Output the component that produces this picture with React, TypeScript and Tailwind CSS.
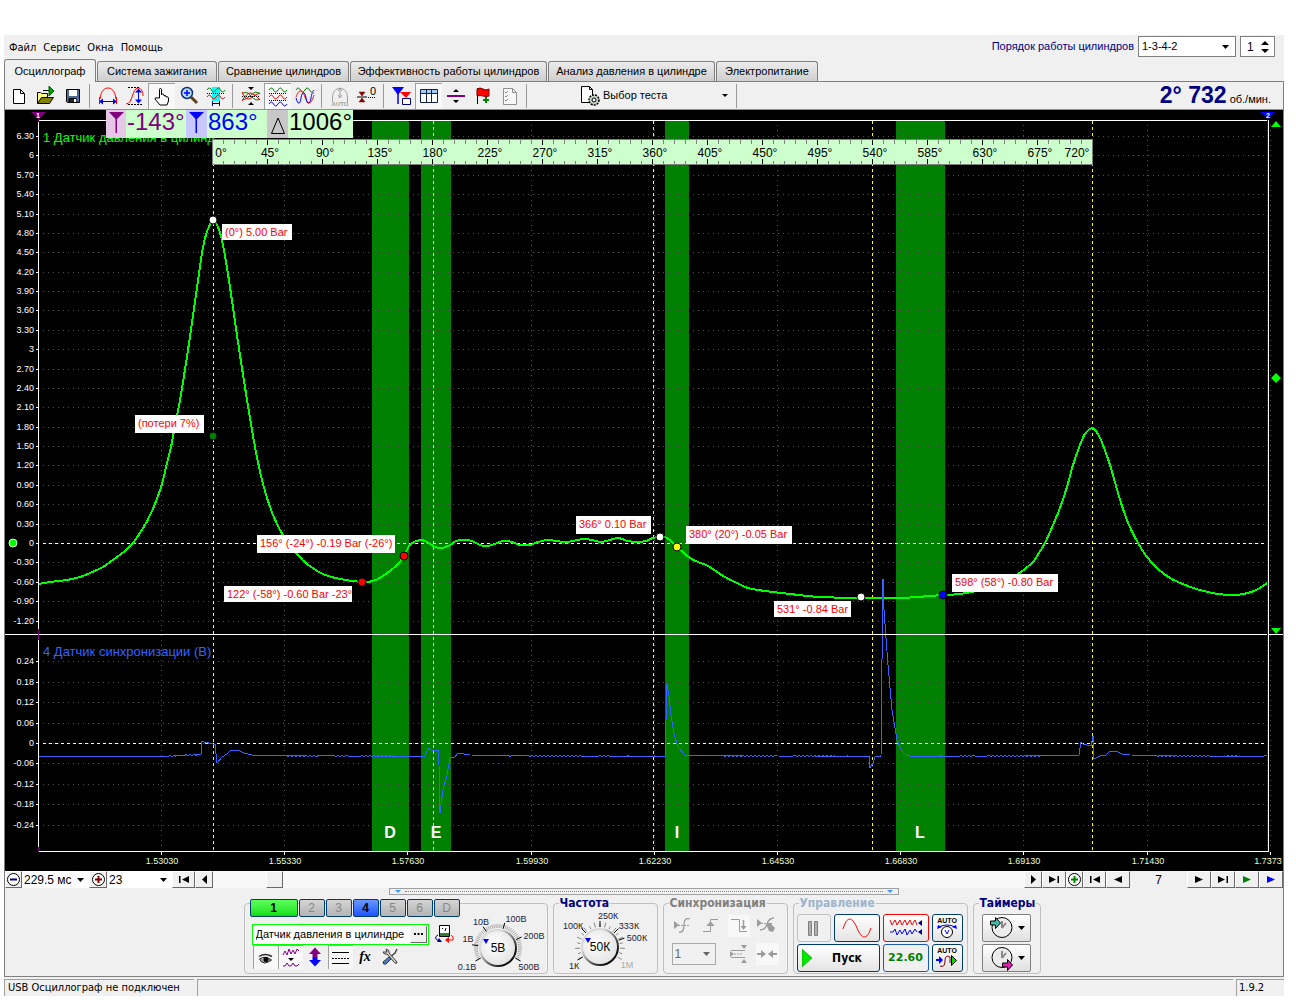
import type { ReactNode } from "react";
import clsx from "clsx";

type Pt = [number, number];

const TABS = [
  { t: "Осциллограф", w: "w-[92px]" },
  { t: "Система зажигания", w: "w-[120px]" },
  { t: "Сравнение цилиндров", w: "w-[131px]" },
  { t: "Эффективность работы цилиндров", w: "w-[197px]" },
  { t: "Анализ давления в цилиндре", w: "w-[167px]" },
  { t: "Электропитание", w: "w-[102px]" },
];

/* ---------- chart data, in the chart's own coordinates ---------- */

const PRESSURE: Pt[] = [
  [38, 584], [50, 582], [67, 580], [80, 577], [90, 573], [103, 567], [110, 562], [117, 557], [125, 551], [133, 543],
  [145, 525], [150, 515], [155, 504], [162, 484], [166, 467], [171, 447], [174, 431], [180, 400], [188, 350], [196, 295],
  [203, 247], [208, 229], [213, 221], [218, 227], [223, 245], [230, 287], [238, 342], [247, 400], [255, 447],
  [263, 484], [273, 515], [284, 537], [298, 555], [307, 564], [323, 574], [340, 579], [362, 582], [373, 581],
  [383, 576], [397, 565], [404, 556], [410, 545], [420, 540], [427, 542], [435, 547], [442, 548], [450, 545],
  [456, 541], [464, 540], [472, 541], [480, 545], [487, 546], [495, 544], [503, 541], [512, 542], [520, 545],
  [530, 545], [538, 542], [547, 540], [556, 541], [565, 542], [573, 541], [583, 539], [592, 540], [601, 542],
  [610, 540], [618, 538], [628, 541], [637, 542], [646, 541], [653, 538], [660, 537], [667, 538], [677, 547],
  [690, 558], [698, 562], [706, 565], [713, 569], [723, 576], [737, 583], [748, 588], [765, 591], [790, 594], [820, 597],
  [861, 598], [900, 598], [930, 596], [943, 595], [960, 594], [980, 590], [1000, 583], [1018, 574], [1026, 568],
  [1033, 562], [1039, 553], [1045, 543], [1053, 525], [1060, 508], [1067, 487], [1073, 465], [1080, 445], [1085, 434],
  [1092, 428], [1096, 431], [1101, 440], [1110, 465], [1116, 486], [1122, 506], [1129, 525], [1138, 543],
  [1147, 557], [1158, 569], [1170, 578], [1185, 585], [1200, 590], [1218, 594], [1235, 595], [1248, 593],
  [1258, 589], [1267, 583],
];

const SYNC: Pt[] = [
  [38, 756], [160, 756], [201, 754], [202, 741], [204, 742], [213, 744], [215, 744], [217, 763], [222, 757], [227, 754],
  [231, 750], [238, 750], [244, 753], [252, 755], [425, 756], [428, 748], [431, 750], [438, 750], [439, 765],
  [440, 813], [443, 790], [447, 775], [450, 758], [455, 757], [458, 753], [470, 755], [665, 756], [667, 684],
  [669, 696], [671, 715], [674, 734], [678, 747], [685, 755], [869, 756], [870, 768], [873, 763], [875, 757],
  [881, 756], [882, 660], [883, 579], [884, 610], [888, 665], [892, 710], [897, 740], [902, 751], [907, 756],
  [1079, 755], [1081, 742], [1083, 744], [1091, 746], [1093, 736], [1094, 759], [1100, 756], [1106, 755],
  [1110, 751], [1116, 751], [1122, 754], [1130, 755], [1267, 756],
];

const BANDS = [
  { x: 372, w: 37, name: "D", cx: 390 },
  { x: 421, w: 30, name: "E", cx: 436 },
  { x: 665, w: 24, name: "I", cx: 677 },
  { x: 896, w: 49, name: "L", cx: 920 },
];

const NOTES = [
  { x: 222, y: 224, w: 70, h: 16, text: "(0°) 5.00 Bar" },
  { x: 135, y: 415, w: 69, h: 18, text: "(потери 7%)" },
  { x: 257, y: 535, w: 138, h: 18, text: "156° (-24°) -0.19 Bar (-26°)" },
  { x: 224, y: 586, w: 128, h: 16, text: "122° (-58°) -0.60 Bar -23°" },
  { x: 576, y: 516, w: 75, h: 18, text: "366° 0.10 Bar" },
  { x: 686, y: 526, w: 106, h: 18, text: "380° (20°) -0.05 Bar" },
  { x: 774, y: 601, w: 77, h: 16, text: "531° -0.84 Bar" },
  { x: 952, y: 574, w: 106, h: 18, text: "598° (58°) -0.80 Bar" },
];

const DOTS = [
  { x: 213, y: 220, c: "#fff" }, { x: 213, y: 436, c: "#008000" }, { x: 362, y: 582, c: "#f00" },
  { x: 404, y: 556, c: "#f00" }, { x: 660, y: 537, c: "#fff" }, { x: 677, y: 547, c: "#ff0" },
  { x: 861, y: 597, c: "#fff" }, { x: 943, y: 595, c: "#00f" },
];

const TIMES = ["1.53030", "1.55330", "1.57630", "1.59930", "1.62230", "1.64530", "1.66830", "1.69130", "1.71430", "1.7373"];
const BARS = Array.from({ length: 26 }, (_, i) => 6.3 - i * 0.3);
const VOLTS = Array.from({ length: 9 }, (_, i) => 0.24 - i * 0.06);

const fmt = (v: number) => {
  const r = Math.round(v * 100) / 100;
  return Number.isInteger(r) ? String(r + 0) : r.toFixed(2);
};

// catmull-rom through the sampled points
function smooth(p: Pt[]) {
  let d = `M${p[0][0]} ${p[0][1]}`;
  for (let i = 0; i < p.length - 1; i++) {
    const a = p[i - 1] || p[i], b = p[i], c = p[i + 1], e = p[i + 2] || c;
    d += `C${b[0] + (c[0] - a[0]) / 6} ${b[1] + (c[1] - a[1]) / 6} ${c[0] - (e[0] - b[0]) / 6} ${c[1] - (e[1] - b[1]) / 6} ${c[0]} ${c[1]}`;
  }
  return d;
}

// flat stretches get a one pixel ripple
function ripple(p: Pt[]) {
  const out: string[] = [];
  p.forEach(([x, y], i) => {
    out.push(`${x},${y}`);
    const n = p[i + 1];
    if (!n || n[0] - x < 15) return;
    for (let t = x + 2, k = 0; t < n[0] - 2; t += 2, k++) {
      const base = y + ((n[1] - y) * (t - x)) / (n[0] - x);
      const on = Math.sin(t * 0.07) + Math.sin(t * 0.19) > -0.6;
      out.push(`${t},${base + (on ? (k % 2 ? 1 : 0) : 0.5)}`);
    }
  });
  return out.join(" ");
}

function Chart() {
  const gx = TIMES.map((_, i) => Math.round(161 + i * 123.2));
  const ly = (v: number) => Math.round(543 - v * 64.6);
  const vy = (v: number) => Math.round(743 - v * 341);
  return (
    <svg viewBox="5 110 1278 761" className="block w-full h-auto bg-black" fontFamily="'Liberation Sans', Arial, sans-serif">
      <g shapeRendering="crispEdges">
        {BANDS.map((b) => <rect key={b.name} x={b.x} y={121} width={b.w} height={730} fill="#008000" />)}
        <g stroke="#505050" strokeDasharray="1 4">
          {BARS.map((v) => <path key={v} d={`M43 ${ly(v) + 0.5}H1266`} />)}
          {VOLTS.map((v) => <path key={v} d={`M43 ${vy(v) + 0.5}H1266`} />)}
          {gx.map((x) => <path key={x} d={`M${x + 0.5} 125V850`} />)}
        </g>
        <path d="M43 543.5H1266M43 743.5H1266" stroke="#fff" strokeDasharray="3 3" />
        {[213, 433, 653, 872, 1092].map((x) => (
          <path key={x} d={`M${x + 0.5} 121V850`} stroke="#ff0" strokeDasharray="3 3" />
        ))}
      </g>
      <text x="43" y="142" fontSize="13" fill="#0f0">1 Датчик давления в цилинд</text>
      <text x="43" y="656" fontSize="13" fill="#3264ff">4 Датчик синхронизации (В)</text>
      <path d={smooth(PRESSURE)} fill="none" stroke="#0f0" strokeWidth="2" shapeRendering="crispEdges" />
      <polyline points={ripple(SYNC)} fill="none" stroke="#3264ff" strokeWidth="1" shapeRendering="crispEdges" />

      <g shapeRendering="crispEdges" fill="none" stroke="#fff">
        <path d="M38.5 120.5H1268.5V851.5H38.5zM5 634.5H1283" />
        {BARS.map((v) => <path key={v} d={`M36 ${ly(v) + 0.5}h3`} />)}
        {VOLTS.map((v) => <path key={v} d={`M36 ${vy(v) + 0.5}h3`} />)}
        {gx.map((x) => <path key={x} d={`M${x + 0.5} 852v3`} />)}
        <path d="M1267.5 112V851" stroke="#00f" />
        <path d="M38.5 112v10M38.5 629v11M38.5 847v5" stroke="#800080" />
      </g>
      <g fontSize="9" fill="#fff" textAnchor="end">
        {BARS.map((v) => <text key={v} x="34" y={ly(v) + 3}>{fmt(v)}</text>)}
        {VOLTS.map((v) => <text key={v} x="34" y={vy(v) + 3}>{fmt(v)}</text>)}
      </g>
      <g fontSize="9" fill="#e8ffd0" textAnchor="middle">
        {TIMES.map((t, i) => <text key={t} x={gx[i] + (i === 9 ? -2 : 1)} y="864">{t}</text>)}
      </g>
      <g fontSize="16" fontWeight="bold" fill="#fff" textAnchor="middle">
        {BANDS.map((b) => <text key={b.name} x={b.cx} y="838">{b.name}</text>)}
      </g>

      {/* crank angle ruler */}
      <g shapeRendering="crispEdges">
        <rect x="212.5" y="139.5" width="880" height="25" fill="#ccffcc" stroke="#808080" />
        {Array.from({ length: 79 }, (_, i) => i + 1).map((i) => (
          <path key={i} d={`M${212.5 + i * 11} 140v${i % 5 ? 4 : 5}M${212.5 + i * 11} 164v${i % 5 ? -3 : -5}`} stroke={i % 5 ? "#808080" : "#000"} />
        ))}
      </g>
      <g fontSize="12" fill="#000" textAnchor="middle">
        {Array.from({ length: 16 }, (_, i) => i).map((i) => (
          <text key={i} x={i ? 215 + i * 55 : 221} y="157">{i * 45}°</text>
        ))}
        <text x="1077" y="157">720°</text>
      </g>

      {NOTES.map((n) => (
        <g key={n.text}>
          <rect x={n.x} y={n.y} width={n.w} height={n.h} fill="#fff" />
          <text x={n.x + 3} y={n.y + 12} fontSize="11" fill="#f00">{n.text}</text>
        </g>
      ))}
      {DOTS.map((d) => <circle key={d.x + "/" + d.y} cx={d.x} cy={d.y} r="4" fill={d.c} stroke="#000" strokeWidth="1" />)}

      <circle cx="13" cy="543" r="4" fill="#0f0" stroke="#cfc" strokeWidth="1" />
      <path d="M31 112h15l-7 7z" fill="#800080" />
      <path d="M1260 112h15l-7 7z" fill="#00f" />
      <g fontSize="7" fontWeight="bold" fill="#fff" textAnchor="middle">
        <text x="38" y="118">1</text>
        <text x="1268" y="118">2</text>
      </g>
      <path d="M1276 121l5 6h-10zM1276 634l5-6h-10zM1276 373l5 5-5 5-5-5z" fill="#0f0" />
    </svg>
  );
}

function Readout() {
  return (
    <div className="absolute left-[101px] top-0 flex h-7 bg-[#ccffcc] text-2xl leading-6 whitespace-nowrap">
      <span className="w-5 bg-[#e6c8e6]"><Flag color="#800080" /></span>
      <span className="w-[60px] text-[#800080] pl-px">-143°</span>
      <span className="w-[21px] bg-[#c8c8ff]"><Flag color="#0000ff" /></span>
      <span className="w-[60px] text-[#0000ff] pl-px">863°</span>
      <span className="w-[21px] bg-[#c8c8c8]">
        <svg viewBox="0 0 20 28" className="w-5 h-7" fill="none" stroke="#000"><path d="M11 8l6.500 15.500h-13z" /></svg>
      </span>
      <span className="w-[65px] pl-px">1006°</span>
    </div>
  );
}

const Flag = ({ color }: { color: string }) => (
  <svg viewBox="0 0 20 28" className="w-5 h-7"><path d="M3 2h15l-7 7v14h-1.500V9z" fill={color} /></svg>
);

/* ---------- icons ---------- */

function Ico({ children, s = 22 }: { children: ReactNode; s?: number }) {
  return <svg viewBox={`0 0 ${s} ${s}`} width={s} height={s} fill="none" stroke="#000" className="shrink-0">{children}</svg>;
}

const Wave = ({ y, c, a = 4 }: { y: number; c: string; a?: number }) => (
  <path d={`M2 ${y}q2.300 ${-a} 4.500 0t4.500 0t4.500 0t4.500 0`} stroke={c} />
);

const icons: Record<string, ReactNode> = {
  new: <path d="M5.500 4.500h7l4 4v10h-11zM12.500 4.500v4h4" fill="#fff" />,
  open: <><path d="M2.500 18.500v-11h3l1 1h6v4" fill="#ffff80" /><path d="M2.500 18.500l4-6h12l-4 6z" fill="#808000" /><path d="M8 5.500h6" /><path d="M14 1l5 5-5 5z" fill="#00a000" stroke="#006000" /></>,
  save: <><path d="M4.500 4.500h13v13h-12l-1-1z" fill="#4a6a9a" /><path d="M7 5h8v6H7z" fill="#fff" stroke="none" /><path d="M7 13.500h7v4H7z" fill="#222" /><path d="M12 14h2v3h-2z" fill="#fff" stroke="none" /></>,
  period: <><path d="M3 14C4 5 8 3 11 3s7 2 8 11" stroke="#f00" /><path d="M2.500 12v7M19.500 12v7" stroke="#f00" /><path d="M5 16.500h12" stroke="#00f" /><path d="M2 16.500l4-3v6zM20 16.500l-4-3v6z" fill="#00f" stroke="none" /></>,
  ampl: <><path d="M2 19c7 0 6-16 12-16 4 0 5 5 5 8" stroke="#f00" /><path d="M4 2.500h12M4 19.500h14" strokeDasharray="2 1" /><path d="M14.500 6v11" stroke="#00f" /><path d="M14.500 3.500l-3.500 4h7zM14.500 18.500l-3.500-4h7z" fill="#00f" stroke="none" /></>,
  hand: <path d="M8.500 13V4.500q0-1 1-1t1 1V10q0-1 1-1t1.500 1v1q1-1 2 0v1q2-1 2.500 1v3l-1.500 4h-7l-5-6q0-2 2-1z" fill="#fff" />,
  zoom: <><circle cx="9" cy="8" r="5.500" fill="#b4dcff" stroke="#103070" strokeWidth="1.500" /><path d="M6 8h6M9 5v6" stroke="#00f" strokeWidth="1.500" /><path d="M13 12l6 6" stroke="#604020" strokeWidth="3" /></>,
  shift: <><path d="M7 2h8v14H7z" fill="#0ff" stroke="none" /><Wave y={5} c="#008000" /><path d="M2 8.500h18" strokeDasharray="1 1" /><Wave y={12} c="#f00" /><path d="M7.500 18.500h7M7.500 16v5M14.500 16v5" stroke="#00008b" /></>,
  cross: <><path d="M2 9q4-4 9 2t9 3" stroke="#008000" /><path d="M2 15q4 0 9-5t9-1" stroke="#008000" /><path d="M2 7q4 10 9 6t9-5" stroke="#f00" /><path d="M2 16q5-9 9-8t9 7" stroke="#f00" /><path d="M2 11.500h18" strokeDasharray="1 1" /><path d="M11 5L8 2h6zM11 17l-3 3h6z" fill="#000" stroke="none" /></>,
  three: <><Wave y={5} c="#008000" /><path d="M2 8.500h18M2 15.500h18" strokeDasharray="1 1" /><Wave y={12} c="#f00" /><Wave y={19} c="#00f" /></>,
  over: <><Wave y={5} c="#008000" /><path d="M2 12c3-8 6-8 9 0s6 8 9-2" stroke="#f00" /><path d="M2 13c2 7 4 7 5 0s4-7 5 0 4 7 5 0 2-5 3-5" stroke="#00f" /></>,
  auto: <><path d="M3.500 13c0-13 15-13 15 0M3.500 13v4M18.500 13v4M11 4v8M9 6l2-3 2 3M9 10l2 3 2-3" stroke="#a0a0a0" /><text x="11" y="21" fontSize="6" fontWeight="bold" textAnchor="middle" fill="#a0a0a0" stroke="none">AUTO</text></>,
  zero: <><path d="M6 11L3 7h6zM6 13l-3 4h6z" fill="#800000" stroke="#800000" strokeWidth=".5" /><path d="M1 12h10" /><path d="M12 12.500h8" strokeDasharray="1 1" /><text x="17" y="10" fontSize="11" textAnchor="middle" fill="#000" stroke="none">0</text></>,
  flags: <><path d="M1 2h12L7 10z" fill="#00f" stroke="none" /><path d="M7 8v11" stroke="#00f" strokeWidth="1.500" /><path d="M9 7h11l-5 6z" fill="#f00" stroke="none" /><path d="M11.500 13.500h8v6h-8z" fill="#fff" stroke="#000080" /></>,
  table: <><path d="M2.500 4.500h17v13h-17z" fill="#fff" stroke="#102050" /><path d="M3 5h16v3H3z" fill="#a8ccf0" stroke="none" /><path d="M3 8.500h16M8.500 5v12M13.500 5v12" stroke="#102050" /></>,
  split: <><path d="M2 11h18" stroke="#800080" strokeWidth="2" /><path d="M11 4l3 3H8zM11 18l3-3H8z" fill="#000" stroke="none" /></>,
  flag: <><path d="M5.500 3v16" /><path d="M5 4q3-2 6 0t6 0v7q-3 1-6 0t-6 0z" fill="#f00" stroke="#800000" /><path d="M14 12v6M11 15h6" stroke="#008000" strokeWidth="2" /></>,
  check: <><path d="M4.500 3.500h9l4 4v12h-13zM13.500 3.500v4h4" stroke="#909090" fill="#f8f8f8" /><path d="M6 7l1 1 2-2M6 11l1 1 2-2M6 15l1 1 2-2" stroke="#909090" /></>,
  test: <><path d="M2.500 1.500h8l3 3v13h-11zM10.500 1.500v3h3" fill="#fff" /><circle cx="15" cy="15" r="5" fill="#c8d8c8" strokeDasharray="2 1" strokeWidth="1.500" /><circle cx="15" cy="15" r="2" fill="#fff" /></>,
  probe: <><path d="M6.500 2.500h10v11h-10z" fill="#fff" /><path d="M7 10h9v3H7z" fill="#308030" stroke="none" /><path d="M9 5l1 1M13 5l-1 3" /><path d="M5 12q-4 2-2 4l3 2" stroke="#000080" /><path d="M4 19h5l-3-4z" fill="#000080" stroke="none" /><path d="M18 12q3 2 2 5l-4 0" stroke="#f00" /><path d="M12 17l4-3v6z" fill="#f00" stroke="none" /></>,
  eye: <><path d="M4 9.500q6-4 13 0" stroke="#333" strokeWidth="1.500" /><path d="M4.500 12q6-4 12 1-4 3-7 3-4-1-5-4z" fill="#aaa" stroke="#222" /><circle cx="11" cy="12.500" r="2.500" fill="#000" stroke="none" /></>,
  noise: <><path d="M3 8l2-4 2 4 2-6 2 5 2-4 2 4 2-5 2 2" stroke="#800080" /><path d="M8 11h6l-3 3z" fill="#000" stroke="none" /><path d="M3 19h2l2-3 2 3h2l2-3 2 3h2l2-2" stroke="#800080" /></>,
  updown: <><path d="M11 1.500l6 6.500h-3.500v3h-5V8H5z" fill="#800080" stroke="none" /><path d="M11 20.500l6-6.500h-3.500v-3h-5v3H5z" fill="#00f" stroke="none" /></>,
  lines: <><path d="M2 5.500h17M2 16.500h17" /><path d="M2 11.500h17" strokeDasharray="2 1" /></>,
  fx: <text x="11" y="15" fontSize="14" fontStyle="italic" fontWeight="bold" fontFamily="'Liberation Serif', serif" textAnchor="middle" fill="#000" stroke="none">fx</text>,
  tools: <><path d="M18 3l-2 4-6 5" stroke="#444" strokeWidth="1.500" /><path d="M10 11l-6 5q0 3 3 2l5-5z" fill="#5080c0" stroke="#234" /><path d="M4 6q1 3 4 2l8 9q2 1 2-1l-8-9q1-3-3-4l1 3z" fill="#ddd" stroke="#333" /></>,
};

/* greyed out trigger icons */
const G = "#9c9c9c";
const sync: Record<string, ReactNode> = {
  level: <><path d="M2 6l5 4-5 4z" fill={G} stroke="none" /><path d="M6 10.500h12" stroke={G} strokeDasharray="2 1" /><path d="M7 17q5 1 5-7t6-6" stroke={G} strokeWidth="1.300" /></>,
  rise: <><path d="M3 16.500h7.500v-12H18" stroke={G} /><path d="M10.500 6l-4 5h8z" fill={G} stroke="none" /></>,
  fall: <><path d="M3 4.500h8.500v12H19" stroke={G} /><path d="M15.500 5v8" stroke={G} strokeWidth="1.500" /><path d="M15.500 15l-3-4h6z" fill={G} stroke="none" /></>,
  none: <><path d="M1 4l5 4-5 4z" fill={G} stroke="none" /><path d="M10 9l4-1 5 5-2 4-4-1z" fill={G} stroke="none" /><path d="M2 8.500h15" stroke={G} strokeDasharray="2 1" /><path d="M4 15q5 0 7-6t7-6" stroke={G} strokeWidth="1.300" /></>,
  window: <><path d="M3 7.500h14M3 14.500h14" stroke={G} /><path d="M3 11h12" stroke={G} strokeDasharray="2 1" /><path d="M13 2h6l-3 4zM13 20h6l-3-4zM2 8l4 3-4 3z" fill={G} stroke="none" /></>,
  meet: <path d="M1 10h4V7l5 4-5 4v-3H1zM21 10h-4V7l-5 4 5 4v-3h4z" fill={G} stroke="none" />,
};

/* ---------- controls ---------- */

const Sep = () => <span className="w-px h-6 bg-[#9a9a9a] ml-[3px] mr-1 shrink-0" />;

function Tool({ name, label, on, small }: { name: string; label: string; on?: boolean; small?: boolean }) {
  return (
    <button aria-label={label} className={clsx("flex items-center justify-center shrink-0", small ? "w-[25px] h-6" : "w-[27px] h-[26px]",
      on && "bg-[#f8f8f8] border-l border-t border-[#a0a0a0]")}>
      <Ico>{icons[name]}</Ico>
    </button>
  );
}

function Combo({ label, value, className }: { label: string; value: string; className?: string }) {
  return (
    <span className={clsx("relative flex items-center", className)}>
      <select aria-label={label} defaultValue={value} className="appearance-none w-full h-full bg-transparent pl-0.5 outline-none">
        <option>{value}</option>
      </select>
      <svg viewBox="0 0 7 4" className="absolute right-[5px] w-[7px] h-1 pointer-events-none"><path d="M0 0h7L3.500 4z" fill="currentColor" /></svg>
    </span>
  );
}

function NavBtn({ label, w = "w-6", children }: { label: string; w?: string; children: ReactNode }) {
  return (
    <button aria-label={label} className={clsx("h-[17px] flex items-center justify-center bg-[#f0f0f0] border border-t-white border-l-white border-b-[#696969] border-r-[#696969]", w)}>
      {children}
    </button>
  );
}

function Arrow({ dir, bar, c = "#000" }: { dir: "l" | "r"; bar?: boolean; c?: string }) {
  return (
    <svg viewBox="0 0 12 9" className={clsx("w-3 h-[9px]", dir === "l" && "-scale-x-100")} fill={c}>
      <path d={bar ? "M1 1l7 3.500L1 8zM9.500 1h1.500v7H9.500z" : "M2 1l8 3.500L2 8z"} />
    </svg>
  );
}

const Step = ({ dir }: { dir: "l" | "r" }) => (
  <svg viewBox="0 0 5 9" className={clsx("w-[5px] h-[9px]", dir === "l" && "-scale-x-100")}><path d="M0 0l5 4.500L0 9z" /></svg>
);

function Round({ plus, c }: { plus?: boolean; c: string }) {
  return (
    <svg viewBox="0 0 15 15" className="w-[15px] h-[15px]" fill="none">
      <circle cx="7.500" cy="7.500" r="6" fill="#fff" stroke="#000" />
      <path d={plus ? "M4 7.500h7M7.500 4v7" : "M4 7.500h7"} stroke={c} strokeWidth="2" />
    </svg>
  );
}

function Group({ title, color, className, children }: { title: string; color: string; className: string; children: ReactNode }) {
  return (
    <fieldset className={clsx("border border-[#c0c0c0] rounded-[4px] min-w-0", className)}>
      <legend className={clsx("ml-[5px] px-px text-[12px] leading-3 font-bold font-['DejaVu_Sans_Condensed',sans-serif]", color)}>{title}</legend>
      {children}
    </fieldset>
  );
}

type Mark = { x: number; y: number; t: string; off?: boolean };

// rotary switch, centred on 0,0
function Knob({ value, marks, fine, box, className }: { value: string; marks: Mark[]; fine?: boolean; box: string; className: string }) {
  const ticks = Array.from({ length: fine ? 49 : 19 }, (_, i) => (fine ? -210 + i * 5 : -210 + i * 13.33));
  const polar = (r: number, a: number) => `${r * Math.cos((a * Math.PI) / 180)} ${r * Math.sin((a * Math.PI) / 180)}`;
  return (
    <svg viewBox={box} className={clsx("shrink-0", className)} role="img" aria-label={value}>
      <defs>
        <linearGradient id={"rim" + value} x1="0" y1="0" x2="1" y2="1">
          <stop offset="0.300" stopColor="#d8d8d8" /><stop offset="0.800" stopColor="#111" />
        </linearGradient>
        <radialGradient id={"cap" + value} cx="0.400" cy="0.400" r="0.600">
          <stop offset="0" stopColor="#fff" /><stop offset="1" stopColor="#e4e4e4" />
        </radialGradient>
      </defs>
      {ticks.map((a, i) => <path key={a} d={`M${polar(20, a)}L${polar(fine ? 24 : i % 2 ? 23 : 25, a)}`} stroke={fine ? "#aaa" : "#888"} />)}
      {(fine ? [-210, -173, -125, -75, -25, 30] : [-210, -135, -90, -45, -20]).map((a) => (
        <path key={a} d={`M${polar(20, a)}L${polar(26, a)}`} stroke="#000" />
      ))}
      <circle r="18" fill={`url(#cap${value})`} stroke={`url(#rim${value})`} strokeWidth="2" />
      <path d="M-15-9h6l-3 5z" fill="#00f" />
      <text y="4" fontSize="12" textAnchor="middle">{value}</text>
      {marks.map((m) => <text key={m.t} x={m.x} y={m.y} fontSize="9" textAnchor="middle" fill={m.off ? "#aaa" : "#223"}>{m.t}</text>)}
    </svg>
  );
}

const BTN = "flex items-center justify-center h-7 rounded-[3px] border border-[#003c74] bg-gradient-to-b from-white to-[#e4e4e4]";

function ChannelPanel() {
  return (
    <section aria-label="Каналы" className="mt-1.5 flex border border-[#c0c0c0] rounded-[4px] w-[304px] pl-[5px]">
      <div className="-mt-[5px] w-[206px]">
        <div className="flex gap-px text-[12px] leading-4">
          {["1", "2", "3", "4", "5", "6", "D"].map((c) => (
            <button key={c} className={clsx("h-[18px] shrink-0 border border-[#003c74] rounded-[2px]",
              c === "1" ? "w-12 bg-gradient-to-b from-[#5cff5c] to-[#00e000] font-bold text-black"
                : c === "4" ? "w-[26px] bg-gradient-to-b from-[#6a96ff] to-[#2050ff] font-bold text-black"
                : "w-[26px] bg-gradient-to-b from-[#d4d4d4] to-[#b4b4b4] text-[#888]")}>{c}</button>
          ))}
        </div>
        <div className="flex items-center mt-1.5 gap-1">
          <div className="flex items-center h-[21px] w-[177px] shrink-0 border border-[#00ff00] bg-white pl-[3px] pr-px ml-0.5">
            <input aria-label="Датчик канала" defaultValue="Датчик давления в цилиндре" className="w-full min-w-0 bg-transparent text-[11px] outline-none" />
            <button aria-label="Выбрать датчик" className="w-[17px] h-[17px] shrink-0 flex items-center justify-center bg-[#f0f0f0] border border-t-white border-l-white border-b-[#696969] border-r-[#696969]">
              <svg viewBox="0 0 9 2" className="w-[9px] h-0.5"><path d="M0 0h2v2H0zM3.500 0h2v2h-2zM7 0h2v2H7z" /></svg>
            </button>
          </div>
          <button aria-label="Щуп"><Ico>{icons.probe}</Ico></button>
        </div>
        <div className="flex ml-[3px]">
          <Tool small name="eye" label="Показать" on />
          <Tool small name="noise" label="Фильтр" on />
          <Tool small name="updown" label="Инверсия" />
          <Tool small name="lines" label="Уровни" on />
          <Tool small name="fx" label="Формула" />
          <Tool small name="tools" label="Настройка" />
        </div>
      </div>
      <Knob value="5В" fine box="-42 -44 92 69" className="w-[92px] h-[69px]" marks={[
        { x: -17, y: -23, t: "10В" }, { x: 18, y: -26, t: "100В" }, { x: 36, y: -9, t: "200В" },
        { x: 31, y: 22, t: "500В" }, { x: -31, y: 22, t: "0.1В" }, { x: -30, y: -6, t: "1В" },
      ]} />
    </section>
  );
}

function BottomPanel() {
  return (
    <div className="flex flex-wrap justify-center gap-[5px] pt-0.5 pr-1 pb-0.5">
      <ChannelPanel />
      <Group title="Частота" color="text-[#000080]" className="w-[105px]">
        <Knob value="50К" box="-46 -38 100 64" className="w-[100px] h-16" marks={[
          { x: 8, y: -28, t: "250К" }, { x: -27, y: -18, t: "100К" }, { x: 29, y: -18, t: "333К" },
          { x: 37, y: -6, t: "500К" }, { x: -26, y: 22, t: "1К" }, { x: 27, y: 21, t: "1М", off: true },
        ]} />
      </Group>
      <Group title="Синхронизация" color="text-[#808080]" className="w-[125px]">
        <div className="flex flex-col gap-1.5 pt-1.5 px-2">
          <div className="flex gap-1.5">
            {["level", "rise", "fall", "none"].map((k) => (
              <button key={k} aria-label={k} disabled className={clsx("w-[23px]", k === "fall" && "bg-[#f8f8f8]")}><Ico>{sync[k]}</Ico></button>
            ))}
          </div>
          <div className="flex items-center gap-1.5">
            <Combo label="Канал синхронизации" value="1" className="w-[47px] h-[22px] mr-1.5 border border-[#a8a8a8] text-[12px] text-[#666]" />
            <button aria-label="Окно" disabled className="w-[22px]"><Ico>{sync.window}</Ico></button>
            <button aria-label="Центр" disabled className="w-6 bg-[#f8f8f8]"><Ico>{sync.meet}</Ico></button>
          </div>
        </div>
      </Group>
      <Group title="Управление" color="text-[#9cb4cc]" className="w-[175px]">
        <div className="grid grid-cols-[34px_46px_46px_31px] gap-x-[3px] gap-y-0.5 pt-[5px] pl-[3px]">
          <button aria-label="Пауза" disabled className="flex items-center justify-center h-7 rounded-[3px] border border-[#c0c0c0]">
            <svg viewBox="0 0 11 15" className="w-[11px] h-[15px]" fill="#b0b0b0" stroke="#808080"><path d="M.5.5h3v14h-3zM6.500.5h3v14h-3z" /></svg>
          </button>
          <button aria-label="Синус" className={BTN}>
            <svg viewBox="0 0 30 20" className="w-[30px] h-5" fill="none" stroke="#f00"><path d="M1 11C5-2 10-2 15 10s10 12 14 0" /></svg>
          </button>
          <button aria-label="Запись" className="flex items-center justify-center h-7 rounded-[3px] border border-[#ff0000] bg-gradient-to-b from-white to-[#e4e4e4]">
            <svg viewBox="0 0 34 20" className="w-[34px] h-5" fill="none">
              <path d="M1 2l2 5 3-5 2 5 3-5 2 5 3-5 2 5 3-5 2 5 3-5 2 5" stroke="#f00" />
              <path d="M1 14h3l2-3 2 6 3-5 2 4 3-5 2 6 3-5 2 4 3-5 2 3" stroke="#00f" />
              <path d="M33 2v6l-4-3zM33 11v6l-4-3z" fill="#000080" />
            </svg>
          </button>
          <button aria-label="Авто напряжение" className={BTN}>
            <svg viewBox="0 0 22 24" className="w-[22px] h-6" fill="none" stroke="#000">
              <text x="11" y="7" fontSize="7" fontWeight="bold" textAnchor="middle" fill="#000" stroke="none">AUTO</text>
              <path d="M3 11q8-4 16 0" stroke="#00f" /><path d="M1 13l1-4 4 2zM21 13l-1-4-4 2z" fill="#00f" stroke="none" />
              <circle cx="11" cy="16" r="5.500" fill="#fff" /><path d="M9 14l2 4 2-4" stroke="#00f" />
            </svg>
          </button>
          <button className={clsx(BTN, "col-span-2 gap-5 pr-3 text-[12px] font-bold font-['DejaVu_Sans_Condensed',sans-serif]")}>
            <svg viewBox="0 0 10 18" className="w-2.5 h-[18px]"><path d="M0 0l10 9-10 9z" fill="#00e800" stroke="#008000" strokeWidth=".5" /></svg>
            Пуск
          </button>
          <output className="flex items-center justify-center h-7 rounded-[3px] border border-[#1c5cb0] text-[11px] font-bold text-[#008000] font-['DejaVu_Sans',sans-serif]">22.60</output>
          <button aria-label="Авто синхронизация" className={BTN}>
            <svg viewBox="0 0 22 24" className="w-[22px] h-6" fill="none" stroke="#000">
              <text x="11" y="7" fontSize="7" fontWeight="bold" textAnchor="middle" fill="#000" stroke="none">AUTO</text>
              <path d="M4 20q5 2 5-5t5-4v6" stroke="#800000" /><path d="M0 14h4" stroke="#00f" strokeWidth="2" /><path d="M3 10l4 4-4 4z" fill="#00f" stroke="none" />
              <path d="M15.500 9.500l5 5-5 5z" fill="#0d0" />
            </svg>
          </button>
        </div>
      </Group>
      <Group title="Таймеры" color="text-[#000080]" className="w-[68px]">
        <div className="flex flex-col gap-0.5 pt-[5px] pl-2">
          {["in", "out"].map((k) => (
            <button key={k} aria-label={k === "in" ? "Таймер пуска" : "Таймер остановки"} className="flex items-center justify-center gap-1 w-[49px] h-7 rounded-[2px] border border-[#808080] bg-gradient-to-b from-white to-[#e0e0e0]">
              <svg viewBox="0 0 26 26" className="w-[26px] h-[26px]" fill="none" stroke="#000">
                <circle cx="14" cy="12.500" r="10" fill="#ececec" />
                <path d="M14 13V6M14 13l4-5" stroke="#888" strokeWidth="2" />
                {k === "in"
                  ? <path d="M2.500 6h5V2.500l5 5.500-5 5.500V10h-5z" fill="#48b8a8" />
                  : <path d="M14.500 18h5v-3.500l5 5.500-5 5.500V22h-5z" fill="#e020b0" />}
              </svg>
              <svg viewBox="0 0 7 4" className="w-[7px] h-1"><path d="M0 0h7L3.500 4z" /></svg>
            </button>
          ))}
        </div>
      </Group>
    </div>
  );
}

function NavBar() {
  return (
    <div className="flex items-center h-[17px] text-[12px] leading-4">
      <NavBtn label="Сжать" w="w-[17px]"><Round c="#000080" /></NavBtn>
      <Combo label="Развёртка" value="229.5 мс" className="w-[67px] h-full bg-white" />
      <NavBtn label="Растянуть" w="w-[18px]"><Round plus c="#800000" /></NavBtn>
      <Combo label="Масштаб" value="23" className="w-[65px] h-full bg-white" />
      <NavBtn label="В начало" w="w-[23px]"><Arrow dir="l" bar /></NavBtn>
      <NavBtn label="Назад" w="w-[18px]"><Step dir="l" /></NavBtn>
      <div className="flex-1 h-full bg-[#f8f8f8] pl-[53px]">
        <div className="w-[17px] h-[17px] bg-[#f0f0f0] border border-t-white border-l-white border-b-[#696969] border-r-[#696969]" />
      </div>
      <NavBtn label="Вперёд" w="w-[18px]"><Step dir="r" /></NavBtn>
      <NavBtn label="В конец"><Arrow dir="r" bar /></NavBtn>
      <NavBtn label="Добавить кадр" w="w-[17px]"><Round plus c="#008000" /></NavBtn>
      <NavBtn label="Первый кадр" w="w-[23px]"><Arrow dir="l" bar /></NavBtn>
      <NavBtn label="Предыдущий кадр"><Arrow dir="l" /></NavBtn>
      <span className="w-[57px] text-center">7</span>
      <NavBtn label="Следующий кадр"><Arrow dir="r" /></NavBtn>
      <NavBtn label="Последний кадр"><Arrow dir="r" bar /></NavBtn>
      <NavBtn label="Воспроизвести"><Arrow dir="r" c="#008000" /></NavBtn>
      <NavBtn label="Воспроизвести всё"><Arrow dir="r" c="#0000ff" /></NavBtn>
    </div>
  );
}

export default function App() {
  return (
    <div className="bg-white pt-[35px] pl-1 pr-3 pb-1 font-['Liberation_Sans',Arial,sans-serif] text-[11px] text-black">
      <div className="bg-[#f0f0f0]">
        <header className="flex items-start justify-between h-6">
          <nav className="flex gap-[7px] pl-[5px] pt-1.5 leading-[14px] font-['DejaVu_Sans_Condensed',sans-serif]">
            {["Файл", "Сервис", "Окна", "Помощь"].map((m) => <button key={m}>{m}</button>)}
          </nav>
          <div className="flex items-center pr-[9px] pt-px">
            <label htmlFor="order" className="text-[#000080] mr-1 whitespace-nowrap">Порядок работы цилиндров</label>
            <span className="relative flex items-center w-[98px] h-[21px] bg-white border border-[#808080] mr-1">
              <select id="order" className="appearance-none w-full h-full pl-[3px] bg-transparent outline-none">
                <option>1-3-4-2</option>
              </select>
              <svg viewBox="0 0 7 4" className="absolute right-1.5 w-[7px] h-1 pointer-events-none"><path d="M0 0h7L3.500 4z" /></svg>
            </span>
            <span className="flex items-center w-[35px] h-[21px] bg-white border border-[#808080]">
              <input aria-label="Номер цилиндра" defaultValue="1" className="w-5 min-w-0 pl-1.5 text-[12px] outline-none" />
              <span className="flex flex-col gap-1">
                <button aria-label="Больше" className="h-1"><svg viewBox="0 0 8 4" className="block w-2 h-1"><path d="M4 0l4 4H0z" /></svg></button>
                <button aria-label="Меньше" className="h-1"><svg viewBox="0 0 8 4" className="block w-2 h-1"><path d="M0 0h8L4 4z" /></svg></button>
              </span>
            </span>
          </div>
        </header>

        <div role="tablist" className="flex items-end gap-px h-[22px]">
          {TABS.map(({ t, w }, i) => (
            <button key={t} role="tab" aria-selected={i === 0}
              className={clsx("border border-b-0 border-[#808080] rounded-t-[3px] whitespace-nowrap", w,
                i === 0 ? "h-[23px] -mb-px bg-[#f0f0f0] relative z-10" : "h-5 bg-gradient-to-b from-[#ececec] to-[#cfcfcf]")}>{t}</button>
          ))}
        </div>

        <main className="border border-[#808080]">
          <div className="flex items-center h-[28px] border-b border-b-[#909090]">
            <Tool name="new" label="Новый" />
            <Tool name="open" label="Открыть" />
            <Tool name="save" label="Сохранить" />
            <Sep />
            <Tool name="period" label="Период" />
            <Tool name="ampl" label="Амплитуда" />
            <Tool name="hand" label="Рука" on />
            <Tool name="zoom" label="Лупа" />
            <Tool name="shift" label="Сдвиг" />
            <Sep />
            <Tool name="cross" label="Совместить" />
            <Tool name="three" label="Раздельно" on />
            <Tool name="over" label="Наложить" />
            <Sep />
            <Tool name="auto" label="Авто" />
            <Tool name="zero" label="Ноль" />
            <Sep />
            <Tool name="flags" label="Маркеры" />
            <Tool name="table" label="Таблица" on />
            <Tool name="split" label="Разделитель" />
            <Tool name="flag" label="Закладка" />
            <Tool name="check" label="Отчёт" />
            <Sep />
            <button className="flex items-center gap-0.5 ml-12 w-[154px] pr-[5px]">
              <Ico>{icons.test}</Ico>
              <span className="flex-1 text-left">Выбор теста</span>
              <svg viewBox="0 0 6 3" className="w-1.5 h-[3px]"><path d="M0 0h6L3 3z" /></svg>
            </button>
            <Sep />
            <p className="ml-auto pr-3 text-[#000080] whitespace-nowrap">
              <b className="text-[23px] leading-6">2° 732</b> <span className="text-black">об./мин.</span>
            </p>
          </div>

          <div className="relative">
            <Chart />
            <Readout />
          </div>
          <NavBar />
          <div className="w-[510px] h-[7px] mx-auto flex items-center justify-between border border-[#a0a0a0] px-[5px]">
            <svg viewBox="0 0 6 3" className="w-1.5 h-[3px]"><path d="M0 0h6L3 3z" fill="#3399ff" /></svg>
            <span className="flex-1 mx-1 border-t border-dotted border-[#3399ff]" />
            <svg viewBox="0 0 6 3" className="w-1.5 h-[3px]"><path d="M0 0h6L3 3z" fill="#3399ff" /></svg>
          </div>
          <BottomPanel />
        </main>

        <footer className="flex gap-[3px] pt-0.5 leading-4 font-['DejaVu_Sans_Condensed',sans-serif]">
          <span className="w-[190px] pl-[3px] border-l border-t border-[#a0a0a0] whitespace-nowrap">USB Осциллограф не подключен</span>
          <span className="flex-1 border-l border-t border-[#a0a0a0]" />
          <span className="w-12 pl-0.5 border-l border-t border-[#a0a0a0]">1.9.2</span>
        </footer>
      </div>
    </div>
  );
}
